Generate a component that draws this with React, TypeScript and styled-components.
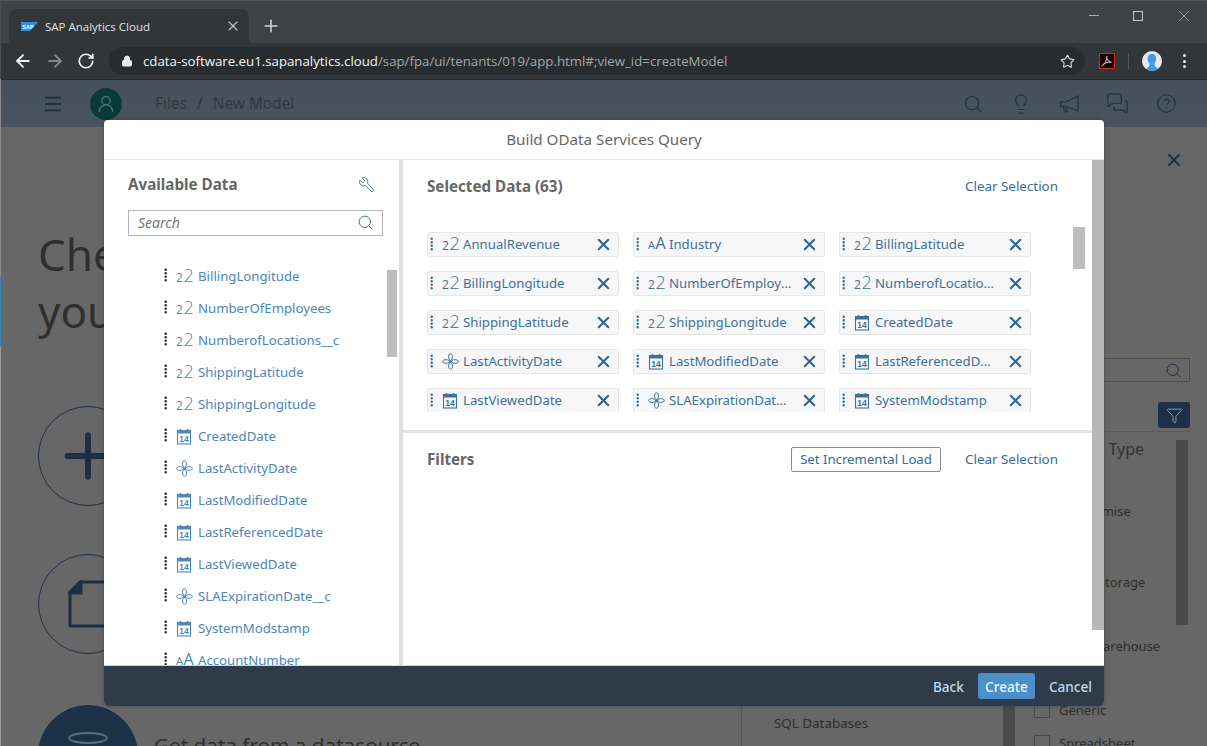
import React from "react";
import styled, { createGlobalStyle } from "styled-components";
import { ArrowLeft, ArrowRight, RotateCw, Lock, Star, X, Plus, Menu, Search, Lightbulb, MessagesSquare, CircleHelp, Wrench, Funnel, UserRound } from "lucide-react";

const Global = createGlobalStyle`
  html, body { margin: 0; padding: 0; width: 1207px; height: 746px; overflow: hidden; background: #676767; }
  * { box-sizing: border-box; }
  #root { width: 1207px; height: 746px; }
`;

const Page = styled.div`
  position: relative;
  width: 1207px;
  height: 746px;
  overflow: hidden;
  display: flex;
  flex-direction: column;
  font-family: "Noto Sans", "Open Sans", sans-serif;
  border-left: 1px solid #8b8b8b;
  border-image: linear-gradient(
      #4a4c4f 80px,
      #8b8b8b 80px,
      #8b8b8b 277px,
      #2f86c8 277px,
      #2f86c8 347px,
      #9a9a9a 347px
    )
    1;
`;

/* browser chrome */
const TabStrip = styled.div`
  height: 43px;
  flex: none;
  background: #404346;
  border-top: 1px solid #55585b;
  display: flex;
  align-items: flex-end;
  padding-left: 8px;
  color: #dfe1e3;
`;
const Tab = styled.div`
  width: 240px;
  height: 34px;
  background: #323639;
  border-radius: 8px 8px 0 0;
  display: flex;
  align-items: center;
  padding: 0 8px 0 12px;
  font: 11.5px "Open Sans", sans-serif;
  gap: 7px;
`;
const TabTitle = styled.span`
  flex: 1;
  white-space: nowrap;
`;
const NewTab = styled.div`
  margin: 0 0 7px 12px;
  display: flex;
`;
const WindowButtons = styled.div`
  margin-left: auto;
  align-self: flex-start;
  display: flex;
  align-items: center;
  height: 29px;
  padding-right: 13px;
  gap: 34px;
`;
const MinBar = styled.span`
  width: 10px;
  height: 1px;
  background: #a9abad;
`;
const MaxBox = styled.span`
  width: 10px;
  height: 10px;
  border: 1px solid #c4c6c8;
  margin-right: -3px;
`;
const Toolbar = styled.div`
  height: 37px;
  flex: none;
  background: #323639;
  display: flex;
  align-items: center;
  padding-left: 12px;
  border-bottom: 1px solid #26292b;
`;
const NavButton = styled.span`
  width: 32px;
  display: flex;
  justify-content: flex-start;
  color: ${(p: { $dim?: boolean }) => (p.$dim ? "#85888a" : "#f2f3f3")};
`;
const Omnibox = styled.div`
  width: 976px;
  height: 28px;
  background: #292c2e;
  border-radius: 14px;
  display: flex;
  align-items: center;
  padding: 0 10px 0 12px;
  color: #d9dbdc;
  font: 13.25px "Open Sans", sans-serif;
`;
const UrlHost = styled.span`
  color: #f1f3f4;
  margin-left: 10px;
`;
const UrlPath = styled.span`
  color: #a3a6a8;
  flex: 1;
`;
const PdfBadge = styled.span`
  width: 16px;
  height: 16px;
  margin-left: 14px;
  background: #1a0505;
  border: 1px solid #d8291a;
  display: flex;
  align-items: center;
  justify-content: center;
`;
const ToolSep = styled.span`
  width: 1px;
  height: 16px;
  background: #55585a;
  margin: 0 13px;
`;
const ProfileDot = styled.span`
  width: 20px;
  height: 20px;
  border-radius: 50%;
  background: #e8eaec;
  display: flex;
  align-items: center;
  justify-content: center;
  overflow: hidden;
`;
const KebabDots = styled.span`
  margin-left: 21px;
  display: flex;
  flex-direction: column;
  gap: 2.5px;
  & > i {
    width: 3px;
    height: 3px;
    border-radius: 50%;
    background: #f0f1f1;
  }
`;

/* SAC shell, dimmed */
const AppBar = styled.header`
  height: 47px;
  flex: none;
  background: linear-gradient(#46505a, #4a545e);
  display: flex;
  align-items: center;
  padding: 0 30px 0 41px;
  color: #29333e;
  font-size: 15.4px;
`;
const UserBubble = styled.span`
  width: 32px;
  height: 32px;
  border-radius: 50%;
  background: #063b39;
  margin-left: 26px;
  margin-right: 33px;
  display: flex;
  align-items: center;
  justify-content: center;
  color: #4a7573;
`;
const Crumb = styled.span`
  margin: 0 10px 1px 0;
  color: #2f3842;
`;
const ShellIcons = styled.div`
  margin-left: auto;
  display: flex;
  gap: 27px;
  color: #1d3245;
  align-items: center;
`;
const Workspace = styled.main`
  flex: 1;
  display: flex;
  background: #676767;
  color: #2d2d2d;
  min-height: 0;
`;
const MainPane = styled.div`
  width: 740px;
  flex: none;
  padding: 99px 0 0 37px;
`;
const Headline = styled.h1`
  margin: 0 0 66px;
  font: 400 44px/57px "Noto Sans", sans-serif;
  color: #2f2f2f;
`;
const Choice = styled.div`
  display: flex;
  align-items: center;
  gap: 16px;
  margin-bottom: ${(p: { $after: number }) => p.$after}px;
  color: #1c2f45;
`;
const Ring = styled.div`
  width: 100px;
  height: 100px;
  flex: none;
  border-radius: 50%;
  border: 1px solid #1c3048;
  display: flex;
  align-items: center;
  justify-content: center;
`;
const SolidRing = styled(Ring)`
  background: #1c3048;
  align-items: flex-start;
  padding-top: 26px;
`;
const ChoiceText = styled.span`
  font-size: 20.7px;
  color: #2f2f2f;
  align-self: flex-start;
  padding-top: 26px;
  white-space: nowrap;
`;
const SidePane = styled.aside`
  flex: 1;
  display: flex;
  flex-direction: column;
  align-items: stretch;
  padding-top: 22px;
`;
const SideClose = styled.div`
  align-self: flex-end;
  margin-right: 23px;
  height: 22px;
  display: flex;
  align-items: center;
  color: #18304a;
`;
const SideSearch = styled.div`
  margin: 187px 17px 0 auto;
  width: 300px;
  height: 24px;
  border: 1px solid #4e4e4e;
  display: flex;
  align-items: center;
  justify-content: flex-end;
  padding-right: 7px;
  color: #1c2f45;
`;
const SideFilter = styled.div`
  margin: 20px 17px 0 auto;
  width: 32px;
  height: 26px;
  border-radius: 3px;
  background: #1c3048;
  display: flex;
  align-items: center;
  justify-content: center;
  color: #8f9aa6;
`;
const SideColumns = styled.div`
  flex: 1;
  margin-top: 3px;
  display: grid;
  grid-template-columns: 291px 1fr;
  min-height: 0;
`;
const SourceCol = styled.div`
  position: relative;
  border-left: 1px solid #565656;
  border-top: 1px solid #5a5a5a;
  display: flex;
  flex-direction: column;
  justify-content: flex-end;
  padding: 0 0 14px 32px;
  font-size: 13.4px;
  color: #2e2e2e;
`;
const SourceName = styled.span`
  margin-bottom: 5px;
  white-space: nowrap;
`;
const Thumb = styled.span`
  position: absolute;
  top: ${(p: { $t: number; $h: number; $r: number }) => p.$t}px;
  right: ${(p) => p.$r}px;
  height: ${(p) => p.$h}px;
  width: 12px;
  background: #4b4b4b;
`;
const TypeCol = styled.div`
  position: relative;
  border-top: 1px solid #5a5a5a;
  margin-right: 17px;
  font-size: 13px;
  color: #2e2e2e;
  padding-left: 2px;
`;
const TypeTitle = styled.div`
  font-size: 16px;
  line-height: 22px;
  margin-top: 6px;
  color: #333;
  padding-left: 19px;
`;
const TypeRow = styled.div`
  display: flex;
  align-items: center;
  gap: 9px;
  height: 16px;
  margin-top: ${(p: { $m: number }) => p.$m}px;
  white-space: nowrap;
`;
const Box = styled.span`
  width: 16px;
  height: 16px;
  flex: none;
  border: 1px solid #4a4a4a;
`;

/* dialog */
const Dialog = styled.section`
  position: absolute;
  left: 103px;
  top: 120px;
  width: 1000px;
  height: 586px;
  background: #fff;
  border-radius: 4px;
  display: flex;
  flex-direction: column;
  overflow: hidden;
  box-shadow: 0 0 4px rgba(0, 0, 0, 0.3);
`;
const DialogTitle = styled.div`
  height: 40px;
  flex: none;
  border-bottom: 1px solid #e6e6e6;
  padding-bottom: 2px;
  display: flex;
  align-items: center;
  justify-content: center;
  color: #666;
  font-size: 15.2px;
`;
const DialogBody = styled.div`
  flex: 1;
  display: flex;
  min-height: 0;
`;
const LeftPanel = styled.div`
  position: relative;
  width: 299px;
  flex: none;
  border-right: 4px solid #dfdfdf;
  display: flex;
  flex-direction: column;
  padding-left: 24px;
  overflow: hidden;
`;
const PanelHead = styled.div`
  height: 50px;
  flex: none;
  display: flex;
  align-items: center;
  justify-content: space-between;
  padding: 0 24px 2px 0;
  color: #4f7ea8;
`;
const PanelTitle = styled.h2`
  margin: 0;
  font: 700 15.2px "Noto Sans", sans-serif;
  color: #666;
`;
const SearchField = styled.div`
  width: 255px;
  height: 26px;
  flex: none;
  border: 1px solid #b4b4b4;
  display: flex;
  align-items: center;
  justify-content: space-between;
  padding: 0 8px 1px 9px;
  font: italic 14px "Noto Sans", sans-serif;
  color: #767676;
`;
const TreeList = styled.div`
  margin-top: 24px;
  padding-left: 36px;
  display: flex;
  flex-direction: column;
`;
const TreeRow = styled.div`
  height: 32px;
  flex: none;
  display: flex;
  align-items: center;
  color: #4b86b8;
  font-size: 13.2px;
  white-space: nowrap;
`;
const Handle = styled.span`
  width: 12px;
  flex: none;
  display: flex;
  color: ${(p: { $blue?: boolean }) => (p.$blue ? "#3f6f9b" : "#333")};
  margin-top: -3px;
`;
const TypeIcon = styled.span`
  width: 22px;
  flex: none;
  display: flex;
  align-items: center;
  color: inherit;
`;
const TinyGlyph = styled.span`
  font: ${(p: { $s: number; $w: number }) => p.$w} ${(p) => p.$s}px/1 "Open Sans", sans-serif;
`;
const GlyphPair = styled.span`
  display: flex;
  align-items: baseline;
  gap: 0.5px;
  width: 18px;
  margin-top: -3px;
`;
const ListThumb = styled.span`
  position: absolute;
  right: 2px;
  top: 110px;
  width: 10px;
  height: 87px;
  background: #bdbdbd;
`;
const RightPanel = styled.div`
  flex: 1;
  display: flex;
  flex-direction: column;
  min-width: 0;
`;
const SelectedBlock = styled.div`
  position: relative;
  height: 273px;
  flex: none;
  border-bottom: 3px solid #e4e4e4;
  padding: 0 34px 0 24px;
`;
const BlockHead = styled.div`
  height: 53px;
  padding-bottom: 2px;
  display: flex;
  align-items: center;
  justify-content: space-between;
`;
const BlockTitle = styled.h2`
  margin: 0;
  font: 700 15.2px "Noto Sans", sans-serif;
  color: #666;
`;
const LinkButton = styled.span`
  font-size: 13.4px;
  color: #346c9c;
  white-space: nowrap;
`;
const TokenClip = styled.div`
  margin-top: 19px;
  height: 180px;
  overflow: hidden;
`;
const TokenGrid = styled.div`
  display: grid;
  grid-template-columns: repeat(3, 192px);
  grid-auto-rows: 25px;
  gap: 14px;
`;
const Token = styled.div`
  background: #f7f7f7;
  border: 1px solid #e6e6e6;
  border-radius: 2px;
  display: flex;
  align-items: center;
  padding-left: 2px;
  color: #3f6f9b;
  font-size: 13.2px;
`;
const TokenLabel = styled.span`
  flex: 1;
  min-width: 0;
  margin: 0 3px 2px -1px;
  overflow: hidden;
  text-overflow: ellipsis;
  white-space: nowrap;
`;
const TokenClose = styled.span`
  width: 28px;
  flex: none;
  display: flex;
  justify-content: center;
  margin-right: 1px;
  color: #2f6596;
`;
const TokenThumb = styled.span`
  position: absolute;
  right: 7px;
  top: 67px;
  width: 12px;
  height: 42px;
  background: #bdbdbd;
`;
const FiltersBlock = styled.div`
  flex: 1;
  padding: 0 34px 0 24px;
`;
const FiltersHead = styled.div`
  display: flex;
  align-items: center;
  height: 52px;
  gap: 24px;
`;
const OutlineButton = styled.span`
  margin-left: auto;
  height: 25px;
  width: 150px;
  border: 1px solid #8d8d8d;
  border-radius: 2px;
  display: flex;
  align-items: center;
  justify-content: center;
  font-size: 13.2px;
  color: #346c9c;
  white-space: nowrap;
`;
const PanelTrack = styled.div`
  width: 12px;
  flex: none;
  background: linear-gradient(#b8b8b8 470px, #fff 470px);
`;
const DialogFooter = styled.footer`
  height: 41px;
  flex: none;
  background: #2f3b49;
  border-top: 1px solid #d5d8db;
  display: flex;
  align-items: center;
  justify-content: flex-end;
  padding-right: 12px;
  gap: 14px;
  font-size: 13.6px;
  font-weight: 500;
  color: #c3d9ec;
`;
const PrimaryButton = styled.span`
  height: 26px;
  width: 57px;
  background: #4b8fcb;
  border-radius: 3px;
  color: #eef5fb;
  display: flex;
  align-items: center;
  justify-content: center;
`;

type Kind = "num" | "text" | "date" | "time";

const Dots = () => (
  <svg width="4" height="15" viewBox="0 0 4 15">
    {[1.5, 5, 8.5, 12].map((y) => (
      <rect key={y} x="0.5" y={y} width="2.4" height="2.4" rx="1" fill="currentColor" />
    ))}
  </svg>
);

const DateIcon = () => (
  <svg width="16" height="17" viewBox="0 0 16 17" fill="none" stroke="currentColor">
    <rect x="1.5" y="2.5" width="13" height="13.5" strokeWidth="1.1" />
    <path d="M1.5 3h13v2h-13z" fill="currentColor" />
    <path d="M4.5 1v2M11.5 1v2" strokeWidth="1.4" />
    <text x="8" y="13.6" textAnchor="middle" fontSize="8.5" fontWeight="700" fontFamily="Liberation Sans" fill="currentColor" stroke="none">14</text>
  </svg>
);

const TimeIcon = () => (
  <svg width="17" height="17" viewBox="0 0 17 17" fill="none" stroke="currentColor" strokeWidth="0.9">
    <ellipse cx="8.5" cy="4" rx="2" ry="3.3" />
    <ellipse cx="8.5" cy="13" rx="2" ry="3.3" />
    <ellipse cx="4" cy="8.5" rx="3.4" ry="1.9" />
    <ellipse cx="13" cy="8.5" rx="3.4" ry="1.9" />
    <circle cx="8.5" cy="8.5" r="1" fill="currentColor" />
  </svg>
);

const KindIcon = ({ kind }: { kind: Kind }) => (
  <TypeIcon>
    {kind === "num" && (
      <GlyphPair>
        <TinyGlyph $s={12} $w={400}>2</TinyGlyph>
        <TinyGlyph $s={18} $w={300}>2</TinyGlyph>
      </GlyphPair>
    )}
    {kind === "text" && (
      <GlyphPair>
        <TinyGlyph $s={11} $w={400}>A</TinyGlyph>
        <TinyGlyph $s={16} $w={400}>A</TinyGlyph>
      </GlyphPair>
    )}
    {kind === "date" && <DateIcon />}
    {kind === "time" && <TimeIcon />}
  </TypeIcon>
);

const available: [Kind, string][] = [
  ["num", "BillingLongitude"],
  ["num", "NumberOfEmployees"],
  ["num", "NumberofLocations__c"],
  ["num", "ShippingLatitude"],
  ["num", "ShippingLongitude"],
  ["date", "CreatedDate"],
  ["time", "LastActivityDate"],
  ["date", "LastModifiedDate"],
  ["date", "LastReferencedDate"],
  ["date", "LastViewedDate"],
  ["time", "SLAExpirationDate__c"],
  ["date", "SystemModstamp"],
  ["text", "AccountNumber"],
];

const selected: [Kind, string][] = [
  ["num", "AnnualRevenue"],
  ["text", "Industry"],
  ["num", "BillingLatitude"],
  ["num", "BillingLongitude"],
  ["num", "NumberOfEmployees"],
  ["num", "NumberofLocations__c"],
  ["num", "ShippingLatitude"],
  ["num", "ShippingLongitude"],
  ["date", "CreatedDate"],
  ["time", "LastActivityDate"],
  ["date", "LastModifiedDate"],
  ["date", "LastReferencedDate"],
  ["date", "LastViewedDate"],
  ["time", "SLAExpirationDate__c"],
  ["date", "SystemModstamp"],
];

const SapFlag = () => (
  <svg width="17" height="9" viewBox="0 0 17 9">
    <path d="M0 0h17l-8 9H0z" fill="#2f8fe0" />
    <text x="1.2" y="6.6" fontSize="5.6" fontWeight="700" fontFamily="Liberation Sans" fill="#fff">SAP</text>
  </svg>
);

const Bullhorn = () => (
  <svg width="20" height="18" viewBox="0 0 20 18" fill="none" stroke="currentColor" strokeWidth="1.2">
    <path d="M19 1v15L7 11.5H1.5V7H7z" />
    <path d="M4 11.5l2.5 5.5h2L7 12" />
  </svg>
);

export default function App() {
  return (
    <Page>
      <Global />
      <TabStrip>
        <Tab>
          <SapFlag />
          <TabTitle>SAP Analytics Cloud</TabTitle>
          <X size={16} strokeWidth={1.7} color="#c4c6c8" />
        </Tab>
        <NewTab>
          <Plus size={20} strokeWidth={1.8} color="#d5d7d9" />
        </NewTab>
        <WindowButtons>
          <MinBar />
          <MaxBox />
          <X size={20} strokeWidth={0.9} color="#b5b7b9" />
        </WindowButtons>
      </TabStrip>
      <Toolbar>
        <NavButton><ArrowLeft size={20} strokeWidth={2.2} /></NavButton>
        <NavButton $dim><ArrowRight size={20} strokeWidth={2.2} /></NavButton>
        <NavButton><RotateCw size={18} strokeWidth={2.2} /></NavButton>
        <Omnibox>
          <Lock size={12} fill="#e8e9ea" color="#e8e9ea" />
          <UrlHost>cdata-software.eu1.sapanalytics.cloud</UrlHost>
          <UrlPath>/sap/fpa/ui/tenants/019/app.html#;view_id=createModel</UrlPath>
          <Star size={15} strokeWidth={1.8} color="#d7d9da" />
        </Omnibox>
        <PdfBadge>
          <svg width="12" height="12" viewBox="0 0 12 12" fill="none" stroke="#c9b8b8" strokeWidth="1.1">
            <path d="M6 1c-.8 2.5 .5 5 4.500 6.500C8 6.500 3.500 7.500 1.500 10.500 3.500 9.500 6 5 6 1z" />
          </svg>
        </PdfBadge>
        <ToolSep />
        <ProfileDot>
          <svg width="20" height="20" viewBox="0 0 20 20">
            <path d="M10 3c3 0 4.500 2 4.200 5-.2 2-1.200 3.500-1.700 5 0 2 1 3 3 4v3H5v-3c2-1 2.500-2 2.500-4-.8-1.500-1.800-3-1.900-5C5.500 5 7 3 10 3z" fill="#3d9be9" />
          </svg>
        </ProfileDot>
        <KebabDots><i /><i /><i /></KebabDots>
      </Toolbar>
      <AppBar>
        <Menu size={22} strokeWidth={2} color="#1b2f44" />
        <UserBubble><UserRound size={20} strokeWidth={1.6} /></UserBubble>
        <Crumb>Files</Crumb>
        <Crumb>/</Crumb>
        <Crumb>New Model</Crumb>
        <ShellIcons>
          <Search size={20} strokeWidth={1.4} />
          <Lightbulb size={22} strokeWidth={1.3} />
          <Bullhorn />
          <MessagesSquare size={23} strokeWidth={1.3} />
          <CircleHelp size={21} strokeWidth={1.3} />
        </ShellIcons>
      </AppBar>
      <Workspace>
        <MainPane>
          <Headline>
            Check how
            <br />
            you want
          </Headline>
          <Choice $after={48}>
            <Ring><Plus size={70} strokeWidth={2.06} /></Ring>
          </Choice>
          <Choice $after={51}>
            <Ring>
              <svg width="40" height="48" viewBox="0 0 40 48" fill="none" stroke="#1c2f45" strokeWidth="3">
                <path d="M12 2h26v44H2V12z" strokeLinejoin="round" />
                <path d="M2 13h11V2z" fill="#1c2f45" />
              </svg>
            </Ring>
          </Choice>
          <Choice $after={0}>
            <SolidRing>
              <svg width="40" height="12" viewBox="0 0 40 12" fill="none" stroke="#5d6c7c" strokeWidth="2">
                <ellipse cx="20" cy="6" rx="19" ry="5" />
              </svg>
            </SolidRing>
            <ChoiceText>Get data from a datasource</ChoiceText>
          </Choice>
        </MainPane>
        <SidePane>
          <SideClose><X size={20} strokeWidth={2.4} /></SideClose>
          <SideSearch><Search size={17} strokeWidth={1.4} /></SideSearch>
          <SideFilter><Funnel size={17} strokeWidth={1.4} /></SideFilter>
          <SideColumns>
            <SourceCol>
              <SourceName>SQL Databases</SourceName>
              <Thumb $t={274} $h={40} $r={17} />
            </SourceCol>
            <TypeCol>
              <TypeTitle>Source Type</TypeTitle>
              <TypeRow $m={43}><Box />On-Premise</TypeRow>
              <TypeRow $m={55}><Box />Cloud Storage</TypeRow>
              <TypeRow $m={48}><Box />Data Warehouse</TypeRow>
              <TypeRow $m={48}><Box />Generic</TypeRow>
              <TypeRow $m={17}><Box />Spreadsheet</TypeRow>
              <Thumb $t={8} $h={185} $r={2} />
            </TypeCol>
          </SideColumns>
        </SidePane>
      </Workspace>

      <Dialog>
        <DialogTitle>Build OData Services Query</DialogTitle>
        <DialogBody>
          <LeftPanel>
            <PanelHead>
              <PanelTitle>Available Data</PanelTitle>
              <Wrench size={17} strokeWidth={1.4} style={{ transform: "scaleX(-1)" }} />
            </PanelHead>
            <SearchField>
              Search
              <Search size={17} strokeWidth={1.4} color="#3f6f9b" />
            </SearchField>
            <TreeList>
              {available.map(([kind, name]) => (
                <TreeRow key={name}>
                  <Handle><Dots /></Handle>
                  <KindIcon kind={kind} />
                  {name}
                </TreeRow>
              ))}
            </TreeList>
            <ListThumb />
          </LeftPanel>
          <RightPanel>
            <SelectedBlock>
              <BlockHead>
                <BlockTitle>Selected Data (63)</BlockTitle>
                <LinkButton>Clear Selection</LinkButton>
              </BlockHead>
              <TokenClip>
                <TokenGrid>
                  {selected.map(([kind, name]) => (
                    <Token key={name}>
                      <Handle $blue><Dots /></Handle>
                      <KindIcon kind={kind} />
                      <TokenLabel>{name}</TokenLabel>
                      <TokenClose><X size={19} strokeWidth={2.6} /></TokenClose>
                    </Token>
                  ))}
                </TokenGrid>
              </TokenClip>
              <TokenThumb />
            </SelectedBlock>
            <FiltersBlock>
              <FiltersHead>
                <BlockTitle>Filters</BlockTitle>
                <OutlineButton>Set Incremental Load</OutlineButton>
                <LinkButton>Clear Selection</LinkButton>
              </FiltersHead>
            </FiltersBlock>
          </RightPanel>
          <PanelTrack />
        </DialogBody>
        <DialogFooter>
          <span>Back</span>
          <PrimaryButton>Create</PrimaryButton>
          <span>Cancel</span>
        </DialogFooter>
      </Dialog>
    </Page>
  );
}
